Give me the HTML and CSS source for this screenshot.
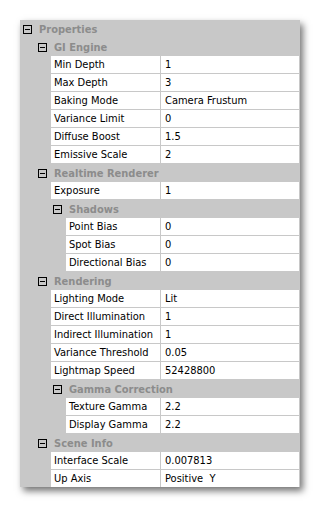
FILE: index.html
```html
<!DOCTYPE html>
<html lang="en">
<head>
  <meta charset="UTF-8">
  <meta name="viewport" content="width=device-width, initial-scale=1.0">
  <title>Property Grid</title>
  <link rel="stylesheet" href="styles.css">
</head>
<body>
  <div class="property-grid">
    <div class="group-head lv0"><span class="toggle"></span>Properties</div>

    <div class="group-head lv1"><span class="toggle"></span>GI Engine</div>
    <div class="prop lv1"><span class="name">Min Depth</span><span class="value">1</span></div>
    <div class="prop lv1"><span class="name">Max Depth</span><span class="value">3</span></div>
    <div class="prop lv1"><span class="name">Baking Mode</span><span class="value">Camera Frustum</span></div>
    <div class="prop lv1"><span class="name">Variance Limit</span><span class="value">0</span></div>
    <div class="prop lv1"><span class="name">Diffuse Boost</span><span class="value">1.5</span></div>
    <div class="prop lv1"><span class="name">Emissive Scale</span><span class="value">2</span></div>

    <div class="group-head lv1"><span class="toggle"></span>Realtime Renderer</div>
    <div class="prop lv1"><span class="name">Exposure</span><span class="value">1</span></div>
    <div class="group-head lv2"><span class="toggle"></span>Shadows</div>
    <div class="prop lv2"><span class="name">Point Bias</span><span class="value">0</span></div>
    <div class="prop lv2"><span class="name">Spot Bias</span><span class="value">0</span></div>
    <div class="prop lv2"><span class="name">Directional Bias</span><span class="value">0</span></div>

    <div class="group-head lv1"><span class="toggle"></span>Rendering</div>
    <div class="prop lv1"><span class="name">Lighting Mode</span><span class="value">Lit</span></div>
    <div class="prop lv1"><span class="name">Direct Illumination</span><span class="value">1</span></div>
    <div class="prop lv1"><span class="name">Indirect Illumination</span><span class="value">1</span></div>
    <div class="prop lv1"><span class="name">Variance Threshold</span><span class="value">0.05</span></div>
    <div class="prop lv1"><span class="name">Lightmap Speed</span><span class="value">52428800</span></div>
    <div class="group-head lv2"><span class="toggle"></span>Gamma Correction</div>
    <div class="prop lv2"><span class="name">Texture Gamma</span><span class="value">2.2</span></div>
    <div class="prop lv2"><span class="name">Display Gamma</span><span class="value">2.2</span></div>

    <div class="group-head lv1"><span class="toggle"></span>Scene Info</div>
    <div class="prop lv1"><span class="name">Interface Scale</span><span class="value">0.007813</span></div>
    <div class="prop lv1"><span class="name">Up Axis</span><span class="value">Positive&nbsp; Y</span></div>
  </div>
</body>
</html>
```

FILE: styles.css
```css
body {
  margin: 0;
  padding: 20px;
  background-color: #fff;
  font-family: Tahoma, "DejaVu Sans Condensed", "DejaVu Sans", sans-serif;
  font-size: 11px;
}
.property-grid {
  width: 279px;
  padding-right: 1px;
  background-color: #c8c8c8;
  box-shadow: 3px 4px 7px rgba(0, 0, 0, 0.55);
}
.group-head {
  display: flex;
  align-items: center;
  height: 18px;
  color: #8c8c8c;
  font-weight: bold;
}
.group-head.lv0 { padding-left: 3px; }
.group-head.lv1 { padding-left: 18px; }
.group-head.lv2 { padding-left: 33px; }
.toggle {
  position: relative;
  width: 7px;
  height: 7px;
  border: 1px solid #000;
  margin-right: 7px;
}
.toggle::after {
  content: "";
  position: absolute;
  left: 1px;
  top: 3px;
  width: 5px;
  height: 1px;
  background-color: #000;
}
.prop {
  display: flex;
  height: 17px;
  line-height: 17px;
  margin-bottom: 1px;
  color: #000;
}
.prop.lv1 { margin-left: 31px; }
.prop.lv2 { margin-left: 46px; }
.prop .name {
  flex: 1;
  padding-left: 3px;
  background-color: #fff;
  border-right: 1px solid #c8c8c8;
  white-space: nowrap;
  overflow: hidden;
}
.prop .value {
  width: 134px;
  padding-left: 4px;
  background-color: #fff;
  white-space: nowrap;
}
```
